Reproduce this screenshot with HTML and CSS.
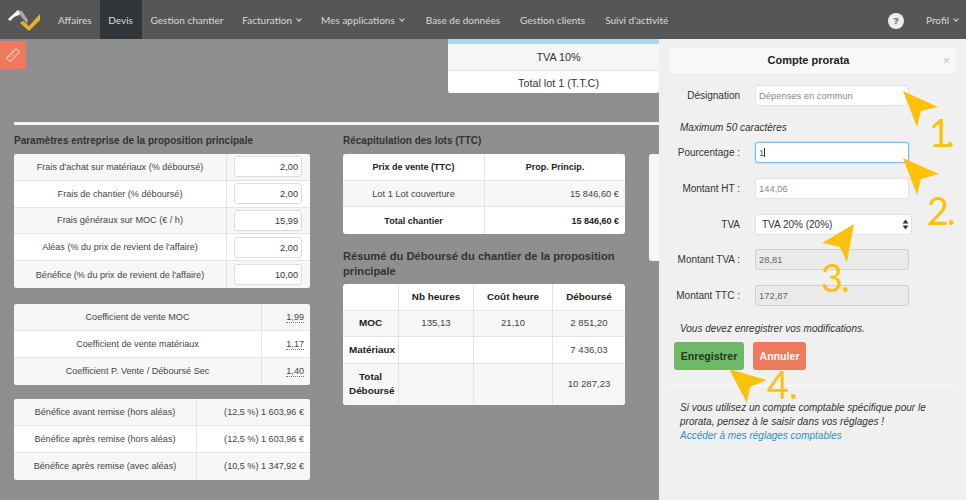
FILE: index.html
```html
<!DOCTYPE html>
<html lang="fr">
<head>
<meta charset="utf-8">
<title>Devis</title>
<link rel="stylesheet" href="styles.css">
</head>
<body>
<nav class="nav">
  <svg class="logo" width="44" height="26" viewBox="0 0 44 26"><path d="M1 11 L11 2 L14 6 L7 9 L3 13Z" fill="#fff"/><path d="M11 2 L15 3 L21 12 L20 16 L13 7Z" fill="#a9a9a2"/><path d="M13 15 L16 13 L22 18 L33 6 L33 12 L22 23Z" fill="#e3b52f"/></svg>
  <a class="item">Affaires</a>
  <a class="item active">Devis</a>
  <a class="item">Gestion chantier</a>
  <a class="item wide-a">Facturation <i class="chev"></i></a>
  <a class="item">Mes applications <i class="chev"></i></a>
  <a class="item wide-b">Base de données</a>
  <a class="item wide-b">Gestion clients</a>
  <a class="item wide-b">Suivi d'activité</a>
  <span class="help">?</span>
  <a class="item profile">Profil <i class="chev"></i></a>
</nav>
<div class="stage">
  <main class="main">
    <div class="ruler"><svg width="16" height="16" viewBox="0 0 16 16" fill="none" stroke="#fbe3da" stroke-width="1"><path d="M1.500 11 L11 1.500 L14.500 5 L5 14.500Z"/><path d="M4 8.500l1.500 1.500M6 6.500l2 2M8 4.500l1.500 1.500"/></svg></div>
    <div class="tva-box">
      <div class="tva-row shade">TVA 10%</div>
      <div class="tva-row plain">Total lot 1 (T.T.C)</div>
    </div>
    <div class="columns">
      <section class="col-a">
        <h3 class="title">Paramètres entreprise de la proposition principale</h3>
        <table class="tbl params">
          <tr class="shade"><td>Frais d'achat sur matériaux (% déboursé)</td><td class="cell-in"><span class="fake">2,00</span></td></tr>
          <tr><td>Frais de chantier (% déboursé)</td><td class="cell-in"><span class="fake">2,00</span></td></tr>
          <tr class="shade"><td>Frais généraux sur MOC (€ / h)</td><td class="cell-in"><span class="fake">15,99</span></td></tr>
          <tr><td>Aléas (% du prix de revient de l'affaire)</td><td class="cell-in"><span class="fake">2,00</span></td></tr>
          <tr class="shade"><td>Bénéfice (% du prix de revient de l'affaire)</td><td class="cell-in"><span class="fake">10,00</span></td></tr>
        </table>
        <table class="tbl coef">
          <tr class="shade"><td>Coefficient de vente MOC</td><td class="num"><span class="dot">1,99</span></td></tr>
          <tr><td>Coefficient de vente matériaux</td><td class="num"><span class="dot">1,17</span></td></tr>
          <tr class="shade"><td>Coefficient P. Vente / Déboursé Sec</td><td class="num"><span class="dot">1,40</span></td></tr>
        </table>
        <table class="tbl bene">
          <tr class="shade"><td>Bénéfice avant remise (hors aléas)</td><td class="num">(12,5 %) 1 603,96 €</td></tr>
          <tr><td>Bénéfice après remise (hors aléas)</td><td class="num">(12,5 %) 1 603,96 €</td></tr>
          <tr class="shade"><td>Bénéfice après remise (avec aléas)</td><td class="num">(10,5 %) 1 347,92 €</td></tr>
        </table>
      </section>
      <section class="col-b">
        <h3 class="title">Récapitulation des lots (TTC)</h3>
        <table class="tbl recap">
          <tr><th>Prix de vente (TTC)</th><th>Prop. Princip.</th></tr>
          <tr class="shade"><td>Lot 1 Lot couverture</td><td class="num">15 846,60 €</td></tr>
          <tr><th>Total chantier</th><th class="num">15 846,60 €</th></tr>
        </table>
        <h3 class="title second">Résumé du Déboursé du chantier de la proposition principale</h3>
        <table class="tbl resume">
          <tr><th></th><th>Nb heures</th><th>Coût heure</th><th>Déboursé</th></tr>
          <tr class="shade"><th>MOC</th><td>135,13</td><td>21,10</td><td>2 851,20</td></tr>
          <tr><th>Matériaux</th><td></td><td></td><td>7 436,03</td></tr>
          <tr class="shade"><th>Total Déboursé</th><td></td><td></td><td>10 287,23</td></tr>
        </table>
      </section>
      <section class="col-c"><div class="stub"></div></section>
    </div>
  </main>
  <aside class="panel">
    <header class="panel-head"><strong>Compte prorata</strong><span class="close">×</span></header>
    <div class="field top"><label>Désignation</label><span class="input ph">Dépenses en commun</span></div>
    <p class="note first">Maximum 50 caractères</p>
    <div class="field tight"><label>Pourcentage :</label><span class="input focus">1<b class="caret"></b></span></div>
    <div class="field"><label>Montant HT :</label><span class="input ph">144,06</span></div>
    <div class="field"><label>TVA</label><span class="input select">TVA 20% (20%)<svg class="updown" width="7" height="11" viewBox="0 0 7 11"><path d="M3.500 0.500 L6.500 4.500 H0.500Z M3.500 10.500 L6.500 6.500 H0.500Z" fill="#333"/></svg></span></div>
    <div class="field less"><label>Montant TVA :</label><span class="input off">28,81</span></div>
    <div class="field"><label>Montant TTC :</label><span class="input off">172,87</span></div>
    <p class="note warn">Vous devez enregistrer vos modifications.</p>
    <div class="actions"><button class="btn save">Enregistrer</button><button class="btn cancel">Annuler</button></div>
    <hr class="rule">
    <p class="note foot">Si vous utilisez un compte comptable spécifique pour le prorata, pensez à le saisir dans vos réglages !<br><a class="link">Accéder à mes réglages comptables</a></p>
  </aside>
  <svg class="arrows" width="966" height="461" viewBox="0 0 966 461"><g fill="#fcc20b"><path d="M903 52 L938 68 L921 72 L917 88Z"/><path d="M903 119 L939 135 L921 140 L917 156Z"/><path d="M854 185 L847 223 L840 208 L822 204Z"/><path d="M729 330 L767 341 L750 348 L747 364Z"/></g></svg>
  <span class="mark m1">1.</span><span class="mark m2">2.</span><span class="mark m3">3.</span><span class="mark m4">4.</span>
</div>
</body>
</html>
```
FILE: styles.css
```css
* { box-sizing: border-box; }
html, body { margin: 0; height: 100%; overflow: hidden; }
body { width: 966px; height: 500px; font-family: "Liberation Sans", Arial, sans-serif; color: #333; background: #8f8f8f; }
.nav { height: 39px; background: #565656; display: flex; align-items: stretch; padding-left: 7px; font-family: Lato, "Open Sans", sans-serif; }
.logo { margin-top: 8px; flex: none; }
.item { display: flex; align-items: center; gap: 4px; color: #d8d8d8; font-size: 10px; margin-left: 18px; white-space: nowrap; }
.logo + .item { margin-left: 7px; }
.item.active { background: #30363a; margin-left: 8px; justify-content: center; width: 42px; color: #dcdcdc; }
.item.active + .item { margin-left: 9px; }
.item.wide-a { margin-left: 19px; }
.item.wide-b { margin-left: 20px; }
.chev { width: 4px; height: 4px; border-right: 1px solid #ddd; border-bottom: 1px solid #ddd; transform: rotate(45deg); margin: -2px 2px 0 1px; }
.help { width: 16px; height: 16px; margin: 13px 0 0 auto; border-radius: 50%; background: #ececec; color: #555; font: bold 9px/16px "Liberation Sans", sans-serif; text-align: center; }
.item.profile { margin-left: 22px; margin-right: 6px; }
.stage { position: relative; height: 461px; display: flex; overflow: hidden; }
.main { position: relative; flex: none; width: 659px; height: 461px; overflow: hidden; background: #8f8f8f; }
.ruler { position: absolute; left: 0; top: 2px; width: 26px; height: 28px; background: #ee7a5e; display: flex; align-items: center; justify-content: center; padding-right: 1px; }
.tva-box { width: 211px; height: 54px; margin-left: 448px; padding-left: 10px; background: #fff; border-top: 5px solid #a9d8ef; border-radius: 0 0 2px 2px; font-size: 10.800px; color: #333; text-align: center; }
.tva-row.shade { height: 27px; line-height: 27px; margin-left: -10px; padding-left: 10px; background: #f6f6f6; border-bottom: 1px solid #e2e2e2; }
.tva-row.plain { height: 22px; line-height: 24px; }
.columns { display: flex; margin: 29px 0 0 14px; border-top: 3px solid #f4f4f4; width: 660px; }
.col-a { width: 296px; flex: none; }
.col-b { width: 282px; margin-left: 33px; flex: none; }
.col-c { width: 40px; margin-left: 24px; flex: none; padding-top: 29px; }
.stub { height: 107px; background: #f7f7f7; border-radius: 3px; }
.title { margin: 0; height: 29px; padding-top: 8px; font-size: 10px; line-height: 15px; font-weight: bold; color: #333; }
.title.second { height: 50px; padding-top: 15px; font-size: 11.200px; line-height: 14.500px; }
.tbl { border-collapse: separate; border-spacing: 0; background: #fff; border-radius: 3px; width: 100%; table-layout: fixed; font-size: 9.100px; color: #444; }
.tbl td, .tbl th { border-right: 1px solid #e4e4e4; border-bottom: 1px solid #e4e4e4; text-align: center; padding: 0 6px; line-height: 14px; }
.tbl tr:last-child td, .tbl tr:last-child th { border-bottom: 0; }
.tbl td:last-child, .tbl th:last-child { border-right: 0; }
.tbl tr:first-child > :first-child { border-top-left-radius: 3px; }
.tbl tr:first-child > :last-child { border-top-right-radius: 3px; }
.tbl tr:last-child > :first-child { border-bottom-left-radius: 3px; }
.tbl tr:last-child > :last-child { border-bottom-right-radius: 3px; }
.tbl th { color: #222; font-weight: bold; }
.tbl .shade td, .tbl .shade th { background: #f7f7f7; }
.tbl .num { text-align: right; }
.params tr { height: 26.800px; }
.params td:last-child { width: 83px; }
.tbl .cell-in { padding: 0 8px 0 7px; }
.fake { display: block; height: 21px; background: #fff; border: 1px solid #ddd; border-radius: 3px; text-align: right; padding: 0 3px; line-height: 20px; font-size: 9.200px; color: #333; }
.coef { margin-top: 16px; }
.coef tr, .bene tr { height: 27px; }
.coef td:last-child { width: 48px; }
.dot { border-bottom: 1px dotted #777; }
.bene { margin-top: 14px; }
.bene td:last-child { width: 113px; }
.recap { font-size: 9.300px; }
.recap th { font-size: 9px; }
.recap tr { height: 26.700px; }
.recap tr > :first-child { width: 142px; }
.resume { font-size: 9.600px; }
.resume th { font-size: 9.900px; }
.resume tr { height: 26.600px; }
.resume th:first-child { width: 56px; }
.resume th:nth-child(2) { width: 75px; }
.resume th:nth-child(3) { width: 79px; }
.resume tr:last-child { height: 41px; }
.panel { position: relative; flex: none; width: 307px; height: 461px; background: #f0f0f0; padding: 9px 10px 0; font-size: 10px; color: #333; }
.panel-head { height: 25px; margin: 0 0 0 1px; padding-right: 9px; background: #f8f8f8; border-radius: 3px; text-align: center; line-height: 25px; position: relative; font-size: 11px; color: #222; }
.close { position: absolute; right: 6px; top: 1px; color: #c4c4c4; font-size: 12px; }
.field { display: flex; align-items: center; height: 21px; margin-top: 15px; }
.field.top { margin-top: 12px; }
.field.tight { margin-top: 7px; }
.field.less { margin-top: 14px; }
.field label { width: 71px; text-align: right; flex: none; font-size: 10px; }
.input { display: block; width: 154px; height: 21px; margin-left: 15px; background: #fff; border: 1px solid #e2e2e2; border-radius: 3px; padding: 0 3px; font-size: 9.400px; line-height: 19px; color: #555; position: relative; }
.input.ph { color: #888; }
.input.focus { border-color: #7fb9e6; box-shadow: 0 0 2px #9cc9ec; }
.caret { display: inline-block; width: 1px; height: 9px; background: #333; vertical-align: -1px; }
.input.select { width: 157px; padding-left: 6px; font-size: 10px; color: #333; }
.updown { position: absolute; right: 2px; top: 4px; }
.input.off { background: #eaeaea; border-color: #cfcfcf; color: #666; }
.note { margin: 0 0 0 11px; font-style: italic; font-size: 10px; line-height: 15px; color: #333; }
.note.first { margin-top: 14px; }
.note.warn { margin-top: 15px; }
.actions { display: flex; gap: 9px; margin: 6px 0 0 5px; }
.btn { height: 28px; border: 0; border-radius: 3px; font: bold 10.600px "Liberation Sans", sans-serif; padding: 0; }
.save { width: 70px; background: #6fb86a; color: #1f3a1d; }
.cancel { width: 53px; background: #ee7a5e; color: #f8f8f8; }
.rule { height: 1px; border: 0; background: #fbfbfb; margin: 15px 0 0 -1px; width: 288px; }
.note.foot { margin-top: 15px; line-height: 14px; }
.link { color: #2e8fc6; }
.arrows { position: absolute; left: 0; top: 0; pointer-events: none; }
.mark { position: absolute; color: #fcc20b; font: 400 38px/26px Lato, "Open Sans", sans-serif; white-space: nowrap; }
.m1 { left: 929px; top: 80px; letter-spacing: -5px; }
.m2 { left: 927px; top: 158px; letter-spacing: -2px; }
.m3 { left: 821px; top: 225px; letter-spacing: -2px; }
.m4 { left: 767px; top: 332px; }
```
